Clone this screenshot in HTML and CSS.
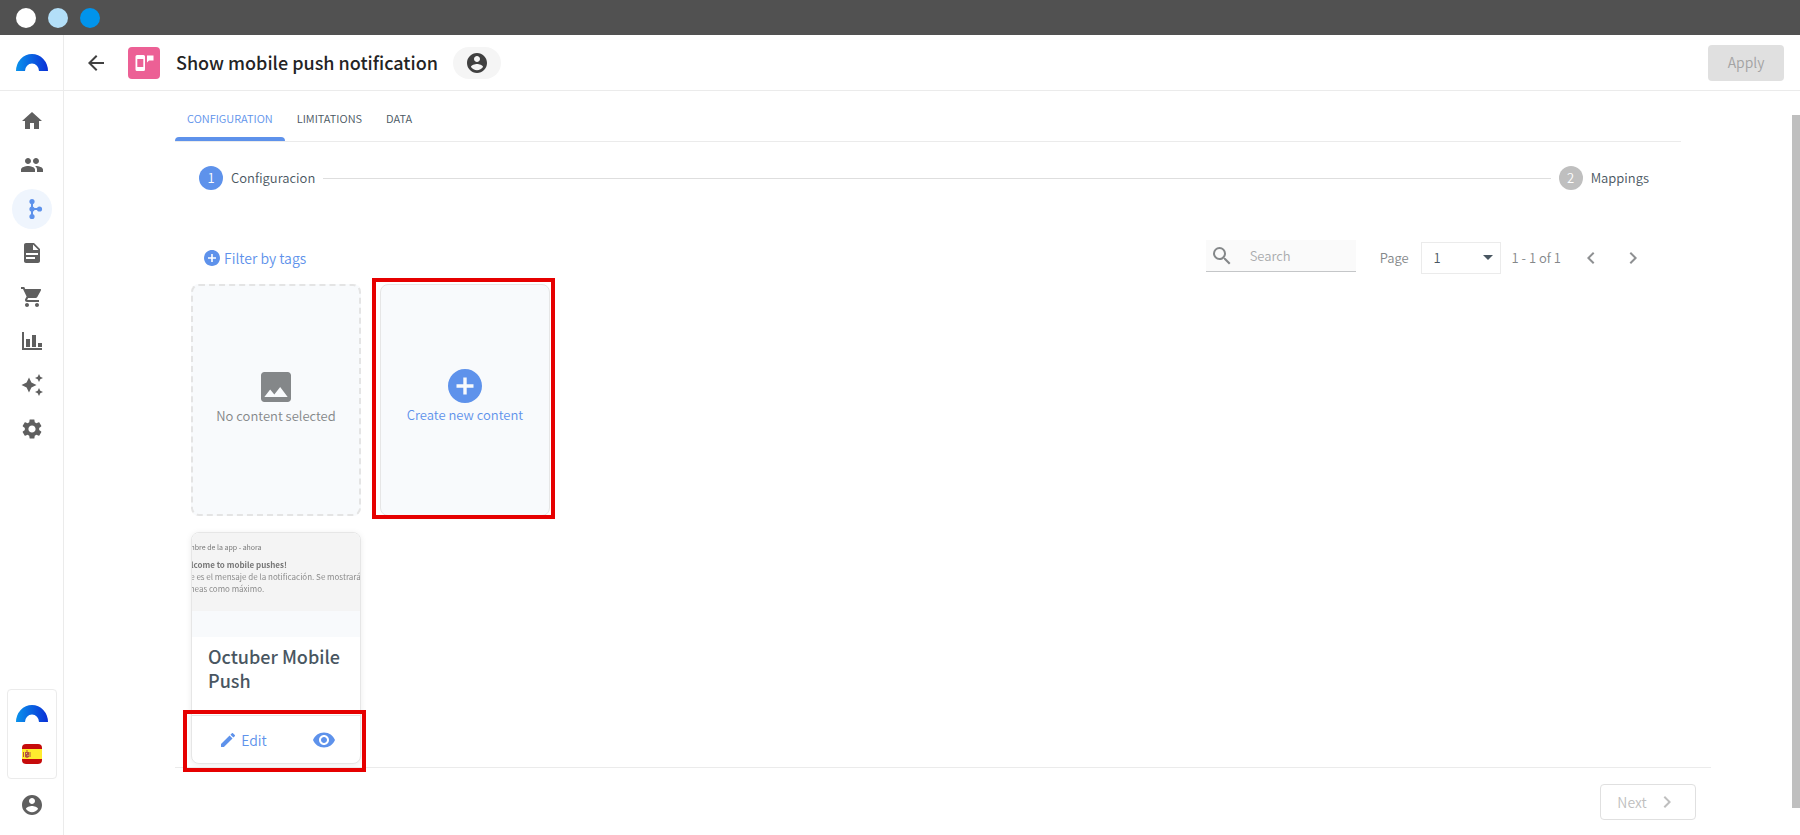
FILE: index.html
```html
<!DOCTYPE html>
<html lang="en">
<head>
    <meta charset="UTF-8">
    <meta name="viewport" content="width=device-width, initial-scale=1.0">
    <title>Show mobile push notification</title>
    <link rel="stylesheet" href="styles.css">
</head>
<body>
    <!-- shared shapes -->
    <svg class="defs" aria-hidden="true">
        <defs>
            <linearGradient id="arc-fill" x1="0" y1="0" x2="1" y2="0">
                <stop offset="0" stop-color="#0a93ec" />
                <stop offset="1" stop-color="#0a2fd6" />
            </linearGradient>
            <symbol id="logo" viewBox="0 0 32 17">
                <path fill="url(#arc-fill)" d="M0 17a16 17 0 0 1 32 0h-9a7 7.500 0 0 0-14 0z" />
            </symbol>
            <symbol id="account" viewBox="2 2 20 20">
                <path d="M12 2C6.480 2 2 6.480 2 12s4.480 10 10 10 10-4.480 10-10S17.520 2 12 2zm0 3c1.660 0 3 1.340 3 3s-1.340 3-3 3-3-1.340-3-3 1.340-3 3-3zm0 14.200c-2.500 0-4.710-1.280-6-3.220.030-1.990 4-3.080 6-3.080 1.990 0 5.970 1.090 6 3.080-1.290 1.940-3.500 3.220-6 3.220z" />
            </symbol>
            <symbol id="plus-circle" viewBox="2 2 20 20">
                <path d="M12 2C6.480 2 2 6.480 2 12s4.480 10 10 10 10-4.480 10-10S17.520 2 12 2zm5 11h-4v4h-2v-4H7v-2h4V7h2v4h4v2z" />
            </symbol>
        </defs>
    </svg>

    <div class="titlebar">
        <span class="dot dot-white"></span>
        <span class="dot dot-light"></span>
        <span class="dot dot-blue"></span>
    </div>

    <div class="app">
        <aside class="sidebar">
            <a href="#" class="brand" aria-label="Start"><svg class="logo"><use href="#logo" /></svg></a>
            <nav class="menu">
                <a href="#" class="menu-item" aria-label="Home"><svg viewBox="0 0 24 24"><path d="M10 20v-6h4v6h5v-8h3L12 3 2 12h3v8z" /></svg></a>
                <a href="#" class="menu-item" aria-label="Users"><svg viewBox="0 0 24 24"><path d="M16 11c1.660 0 2.990-1.340 2.990-3S17.660 5 16 5s-3 1.340-3 3 1.340 3 3 3zm-8 0c1.660 0 2.990-1.340 2.990-3S9.660 5 8 5 5 6.340 5 8s1.340 3 3 3zm0 2c-2.330 0-7 1.170-7 3.500V19h14v-2.500c0-2.330-4.670-3.500-7-3.500zm8 0c-.290 0-.620.020-.970.050 1.160.840 1.970 1.970 1.970 3.450V19h6v-2.500c0-2.330-4.670-3.500-7-3.500z" /></svg></a>
                <a href="#" class="menu-item active" aria-label="Workflows"><svg viewBox="0 0 24 24"><path d="M11 4h2v16h-2zM12 11h8v2h-8z" /><circle cx="12" cy="4.500" r="2.600" /><circle cx="12" cy="12" r="2.600" /><circle cx="12" cy="19.500" r="2.600" /><circle cx="19.500" cy="12" r="2.600" /></svg></a>
                <a href="#" class="menu-item" aria-label="Contents"><svg viewBox="0 0 24 24"><path d="M14 2H6c-1.100 0-1.990.900-1.990 2L4 20c0 1.100.890 2 1.990 2H18c1.100 0 2-.900 2-2V8l-6-6zm2 16H6v-2h9v2zm2-4H6v-2h12v2zm-5-5V3.500L18.500 9H13z" /></svg></a>
                <a href="#" class="menu-item" aria-label="Orders"><svg viewBox="0 0 24 24"><path d="M7 18c-1.100 0-1.990.900-1.990 2S5.900 22 7 22s2-.900 2-2-.900-2-2-2zM1 2v2h2l3.600 7.590-1.350 2.450c-.160.280-.250.610-.250.960 0 1.100.900 2 2 2h12v-2H7.420c-.140 0-.250-.110-.250-.250l.030-.120.900-1.630h7.450c.750 0 1.410-.410 1.750-1.030l3.580-6.490A1 1 0 0 0 20 4H5.210l-.940-2H1zm16 16c-1.100 0-1.990.900-1.990 2s.890 2 1.990 2 2-.900 2-2-.900-2-2-2z" /></svg></a>
                <a href="#" class="menu-item" aria-label="Analytics"><svg viewBox="0 0 24 24"><path d="M2 3h2v16h18v2H2zM6 10h4v8H6zM12 6h4v12h-4zM18 14h4v4h-4z" /></svg></a>
                <a href="#" class="menu-item" aria-label="Predictions"><svg viewBox="0 0 24 24"><path d="M9 4.500l2.400 5.100L16.500 12l-5.100 2.400L9 19.500l-2.400-5.100L1.500 12l5.100-2.400zM19 1l1.300 2.700L23 5l-2.700 1.300L19 9l-1.300-2.700L15 5l2.700-1.300zM19 15l1.300 2.700L23 19l-2.700 1.300L19 23l-1.300-2.700L15 19l2.700-1.300z" /></svg></a>
                <a href="#" class="menu-item" aria-label="Settings"><svg viewBox="0 0 24 24"><path d="M19.140 12.940c.040-.300.060-.610.060-.940 0-.320-.020-.640-.070-.940l2.030-1.580c.180-.140.230-.410.120-.610l-1.920-3.320c-.120-.220-.370-.290-.590-.220l-2.390.960c-.500-.380-1.030-.700-1.620-.940l-.360-2.540c-.040-.240-.240-.410-.480-.410h-3.840c-.240 0-.430.170-.470.410l-.360 2.540c-.590.240-1.130.570-1.620.940l-2.390-.960c-.220-.080-.470 0-.590.220L2.740 8.870c-.120.210-.080.470.120.610l2.030 1.580c-.050.300-.090.630-.090.940s.020.640.070.940l-2.030 1.580c-.180.140-.230.410-.120.610l1.920 3.320c.120.220.370.290.590.220l2.390-.960c.500.380 1.030.700 1.620.940l.360 2.540c.050.240.240.410.480.410h3.840c.240 0 .440-.170.470-.410l.360-2.540c.590-.240 1.130-.560 1.620-.940l2.390.960c.220.080.470 0 .590-.220l1.920-3.320c.120-.220.070-.470-.120-.610l-2.010-1.580zM12 15.600c-1.980 0-3.600-1.620-3.600-3.600s1.620-3.600 3.600-3.600 3.600 1.620 3.600 3.600-1.620 3.600-3.600 3.600z" /></svg></a>
            </nav>
            <div class="workspace">
                <svg class="logo"><use href="#logo" /></svg>
                <svg class="flag" viewBox="0 0 20 20">
                    <path fill="#c60b0b" d="M4 0h12a4 4 0 0 1 4 4v12a4 4 0 0 1-4 4H4a4 4 0 0 1-4-4V4a4 4 0 0 1 4-4z" />
                    <path fill="#ffec2e" d="M0 5h20v10H0z" />
                    <path fill="#b5543c" d="M1 8h1v5H1zM3 8h4v5l-2 1-2-1zM7.500 8h1v5h-1zM4 6.500h2v1H4z" />
                    <path fill="#d9b3a0" d="M4 9h1v1H4zM5.500 11h1v1h-1z" />
                </svg>
            </div>
            <a href="#" class="profile" aria-label="Profile"><svg><use href="#account" /></svg></a>
        </aside>

        <div class="page">
            <header class="header">
                <button class="back" aria-label="Back"><svg viewBox="4 4 16 16"><path d="M20 11H7.830l5.590-5.590L12 4l-8 8 8 8 1.410-1.410L7.830 13H20v-2z" /></svg></button>
                <span class="type-icon">
                    <svg viewBox="0 0 20 20"><path fill-rule="evenodd" d="M3 2h6.500a1.500 1.500 0 0 1 1.500 1.500v13a1.500 1.500 0 0 1-1.500 1.500H3A1.500 1.500 0 0 1 1.500 16.500v-13A1.500 1.500 0 0 1 3 2zm.300 4v8h6V6zM13 2.500h6.500v5H15l-2 2z" /></svg>
                </span>
                <h1>Show mobile push notification</h1>
                <button class="audience" aria-label="Audience"><svg><use href="#account" /></svg></button>
                <button class="apply" disabled>Apply</button>
            </header>

            <div class="body">
                <main class="main">
                    <div class="content">
                        <nav class="tabs">
                            <a href="#" class="tab selected">CONFIGURATION</a>
                            <a href="#" class="tab">LIMITATIONS</a>
                            <a href="#" class="tab">DATA</a>
                        </nav>

                        <div class="stepper">
                            <span class="step-number current">1</span>
                            <span>Configuracion</span>
                            <span class="step-line"></span>
                            <span class="step-number">2</span>
                            <span>Mappings</span>
                        </div>

                        <div class="toolbar">
                            <button class="filter"><svg><use href="#plus-circle" /></svg>Filter by tags</button>
                            <div class="search">
                                <svg viewBox="3 3 18 18"><path d="M15.500 14h-.790l-.280-.270A6.470 6.470 0 0 0 16 9.500 6.500 6.500 0 1 0 9.500 16c1.610 0 3.090-.590 4.230-1.570l.270.280v.790l5 4.990L20.490 19l-4.990-5zm-6 0C7.010 14 5 11.990 5 9.500S7.010 5 9.500 5 14 7.010 14 9.500 11.990 14 9.500 14z" /></svg>
                                <input type="text" placeholder="Search" aria-label="Search">
                            </div>
                            <label for="page-select">Page</label>
                            <div class="select-wrap">
                                <select id="page-select"><option>1</option></select>
                                <span class="caret"></span>
                            </div>
                            <span class="range">1 - 1 of 1</span>
                            <button class="pager" aria-label="Previous page"><svg viewBox="0 0 24 24"><path d="M15.410 7.410L14 6l-6 6 6 6 1.410-1.410L10.830 12z" /></svg></button>
                            <button class="pager" aria-label="Next page"><svg viewBox="0 0 24 24"><path d="M10 6L8.590 7.410 13.170 12l-4.580 4.590L10 18l6-6z" /></svg></button>
                        </div>

                        <div class="cards">
                            <div class="card card-empty">
                                <svg viewBox="3 3 18 18"><path d="M21 19V5c0-1.100-.900-2-2-2H5c-1.100 0-2 .900-2 2v14c0 1.100.900 2 2 2h14c1.100 0 2-.900 2-2zM8.500 13.500l2.500 3.010L14.500 12l4.500 6H5l3.500-4.500z" /></svg>
                                No content selected
                            </div>
                            <button class="card card-new marked">
                                <svg><use href="#plus-circle" /></svg>
                                Create new content
                            </button>
                            <article class="card card-push">
                                <div class="preview">
                                    <div class="push">
                                        <p class="push-app">Nombre de la app - ahora</p>
                                        <p class="push-title">Welcome to mobile pushes!</p>
                                        <p>Este es el mensaje de la notificación. Se mostrará</p>
                                        <p>2 líneas como máximo.</p>
                                    </div>
                                </div>
                                <h2>Octuber Mobile Push</h2>
                                <div class="actions marked">
                                    <button><svg class="pencil" viewBox="3 3 18 18"><path d="M3 17.250V21h3.750L17.810 9.940l-3.750-3.750L3 17.250zM20.710 7.040a1 1 0 0 0 0-1.410l-2.340-2.340a1 1 0 0 0-1.410 0l-1.830 1.830 3.750 3.750 1.830-1.830z" /></svg>Edit</button>
                                    <button aria-label="Preview"><svg class="eye" viewBox="1 4.500 22 15"><path d="M12 4.500C7 4.500 2.730 7.610 1 12c1.730 4.390 6 7.500 11 7.500s9.270-3.110 11-7.500c-1.730-4.390-6-7.500-11-7.500zM12 17c-2.760 0-5-2.240-5-5s2.240-5 5-5 5 2.240 5 5-2.240 5-5 5zm0-8c-1.660 0-3 1.340-3 3s1.340 3 3 3 3-1.340 3-3-1.340-3-3-3z" /></svg></button>
                                </div>
                            </article>
                        </div>
                    </div>
                    <footer class="footer">
                        <button class="next" disabled>Next<svg viewBox="0 0 24 24"><path d="M10 6L8.590 7.410 13.170 12l-4.580 4.590L10 18l6-6z" /></svg></button>
                    </footer>
                </main>
                <div class="scroll"><div class="thumb"></div></div>
            </div>
        </div>
    </div>
</body>
</html>
```

FILE: styles.css
```css
* {
    box-sizing: border-box;
}

body {
    margin: 0;
    height: 100vh;
    display: flex;
    flex-direction: column;
    overflow: hidden;
    background-color: #fff;
    color: #495661;
    /* the Latin letters of Noto Sans CJK are Source Sans */
    font-family: "Source Sans Pro", "Noto Sans CJK SC", sans-serif;
    font-size: 13px;
    font-weight: 350;
    line-height: 20px;
}

h1,
h2,
p {
    margin: 0;
}

a {
    color: inherit;
    text-decoration: none;
}

button {
    display: flex;
    align-items: center;
    justify-content: center;
    padding: 0;
    border: none;
    background: none;
    color: inherit;
    font: inherit;
    cursor: pointer;
}

svg {
    display: block;
    flex: none;
    fill: currentColor;
}

.defs {
    position: absolute;
    width: 0;
    height: 0;
}

/* window bar */
.titlebar {
    flex: none;
    display: flex;
    align-items: center;
    gap: 12px;
    height: 35px;
    padding: 0 16px;
    background-color: #515151;
}

.dot {
    width: 20px;
    height: 20px;
    border-radius: 50%;
}

.dot-white {
    background-color: #fff;
}

.dot-light {
    background-color: #b3dff8;
}

.dot-blue {
    background-color: #0194ec;
}

.app {
    flex: 1;
    display: flex;
    min-height: 0;
}

/* sidebar */
.sidebar {
    flex: none;
    display: flex;
    flex-direction: column;
    align-items: center;
    width: 64px;
    padding-bottom: 20px;
    border-right: 1px solid #ebebeb;
    color: #5f5f5f;
}

.brand {
    display: flex;
    align-items: center;
    justify-content: center;
    width: 100%;
    height: 56px;
    border-bottom: 1px solid #ebebeb;
}

.logo {
    width: 32px;
    height: 17px;
}

.menu {
    display: flex;
    flex-direction: column;
    gap: 4px;
    padding-top: 10px;
}

.menu-item {
    display: flex;
    align-items: center;
    justify-content: center;
    width: 40px;
    height: 40px;
    border-radius: 50%;
}

.menu-item svg {
    width: 24px;
    height: 24px;
}

.menu-item.active {
    background-color: #eff5fd;
    color: #5e92eb;
}

.workspace {
    display: flex;
    flex-direction: column;
    align-items: center;
    gap: 22px;
    width: 50px;
    margin-top: auto;
    padding: 15px 0 14px;
    border: 1px solid #ebebeb;
    border-radius: 4px;
}

.flag,
.profile svg {
    width: 20px;
    height: 20px;
}

.profile {
    margin-top: 16px;
}

/* header */
.page {
    flex: 1;
    display: flex;
    flex-direction: column;
    min-width: 0;
}

.header {
    flex: none;
    display: flex;
    align-items: center;
    height: 56px;
    padding: 0 16px 0 24px;
    border-bottom: 1px solid #ebebeb;
    color: #404040;
}

.back svg {
    width: 16px;
    height: 16px;
}

.type-icon {
    display: flex;
    align-items: center;
    justify-content: center;
    width: 32px;
    height: 32px;
    margin: 0 16px 0 24px;
    border-radius: 4px;
    background-color: #ec6095;
    color: #fff;
}

.type-icon svg {
    width: 20px;
    height: 20px;
}

h1 {
    padding-bottom: 2px;
    color: #242424;
    font-size: 18px;
    font-weight: 500;
    line-height: 24px;
}

.audience {
    width: 48px;
    height: 32px;
    margin-left: 15px;
    border-radius: 16px;
    background-color: #f5f5f5;
}

.audience svg {
    width: 20px;
    height: 20px;
}

.apply {
    width: 76px;
    height: 36px;
    margin-left: auto;
    padding-bottom: 2px;
    border-radius: 4px;
    background-color: #e0e0e0;
    color: #a3a3a3;
    font-size: 14px;
}

/* main area */
.body {
    flex: 1;
    display: flex;
    min-height: 0;
}

.main {
    flex: 1;
    display: flex;
    flex-direction: column;
    min-width: 0;
}

.content {
    flex: 1;
    padding: 0 111px;
}

.scroll {
    width: 8px;
    padding: 24px 0 27px;
}

.thumb {
    height: 100%;
    background-color: #bfbfbf;
}

.tabs {
    display: flex;
    height: 51px;
    border-bottom: 1px solid #ebebeb;
    font-size: 11px;
}

.tab {
    display: flex;
    align-items: center;
    padding: 10px 12px 2px;
    border-bottom: 4px solid transparent;
}

.tab.selected {
    position: relative;
    color: #5e92eb;
}

.tab.selected::after {
    content: "";
    position: absolute;
    left: 0;
    right: 0;
    bottom: -4px;
    height: 4px;
    border-radius: 4px 4px 0 0;
    background-color: #5e92eb;
}

.stepper {
    display: flex;
    align-items: center;
    gap: 8px;
    padding: 24px 32px 24px 24px;
}

.step-number {
    width: 24px;
    height: 24px;
    border-radius: 50%;
    background-color: #bfbfbf;
    color: #fff;
    line-height: 24px;
    text-align: center;
}

.step-number.current {
    background-color: #5e92eb;
}

.step-line {
    flex: 1;
    height: 1px;
    background-color: #dedede;
}

/* toolbar */
.toolbar {
    display: flex;
    align-items: center;
    height: 32px;
    margin-top: 28px;
    padding: 0 36px 0 29px;
    color: #848789;
}

.filter {
    gap: 4px;
    margin-right: auto;
    color: #5e92eb;
    font-size: 14px;
}

.filter svg {
    width: 16px;
    height: 16px;
}

.search {
    display: flex;
    align-items: center;
    width: 150px;
    height: 32px;
    margin: 0 24px 4px 0;
    padding-left: 7px;
    border-bottom: 1px solid #c4c6c8;
    background-color: #fafafa;
}

.search svg {
    width: 18px;
    height: 18px;
}

.search input {
    width: 100px;
    margin-left: 19px;
    padding: 0;
    border: none;
    background: none;
    color: inherit;
    font: inherit;
    outline: none;
}

.search input::placeholder {
    color: #a9abad;
}

.select-wrap {
    position: relative;
    width: 80px;
    margin: 0 11px 0 12px;
}

select {
    display: block;
    appearance: none;
    width: 100%;
    height: 32px;
    padding: 0 12px;
    border: 1px solid #ebebeb;
    border-radius: 0;
    background-color: #fff;
    color: #495661;
    font: inherit;
}

.caret {
    position: absolute;
    top: 13px;
    right: 8px;
    border: 5px solid transparent;
    border-top-color: #495661;
    border-bottom: none;
}

.pager {
    width: 24px;
    height: 32px;
    margin-left: 18px;
    color: #8e9092;
}

.pager svg {
    width: 24px;
    height: 24px;
}

/* cards */
.cards {
    display: grid;
    grid-template-columns: 170px 170px;
    gap: 16px 19px;
    margin-top: 10px;
    padding-left: 16px;
}

.card {
    display: flex;
    flex-direction: column;
    height: 232px;
    border: 1px solid #e6e6e6;
    border-radius: 8px;
    background-color: #f8fafc;
}

.card-empty {
    align-items: center;
    justify-content: center;
    gap: 4px;
    padding-bottom: 3px;
    border: 2px dashed #e4e4e4;
    color: #848789;
}

.card-empty svg {
    width: 30px;
    height: 30px;
}

.card-new {
    gap: 2px;
    padding-bottom: 6px;
    color: #5e92eb;
}

.card-new svg {
    width: 34px;
    height: 34px;
}

.card-push {
    background-color: #fff;
    box-shadow: 0 1px 6px rgba(0, 0, 0, 0.08);
}

.preview {
    display: flex;
    flex-direction: column;
    align-items: center;
    height: 104px;
    overflow: hidden;
    border-radius: 7px 7px 0 0;
    background-color: #f8fafc;
}

.push {
    flex: none;
    width: 202px;
    height: 78px;
    padding: 8px 0 0 4px;
    background-color: #f4f4f4;
    color: #8c8c8c;
    font-size: 8px;
    font-weight: 400;
    line-height: 12px;
    white-space: nowrap;
}

.push p {
    filter: blur(0.3px);
}

.push .push-app {
    margin-bottom: 6px;
    color: #777;
    font-size: 7px;
}

.push .push-title {
    color: #777;
    font-weight: 700;
}

h2 {
    padding: 7px 16px 0;
    font-size: 18px;
    font-weight: 500;
    line-height: 24px;
}

.actions {
    display: grid;
    grid-template-columns: 104px 56px;
    height: 48px;
    margin-top: auto;
    border-top: 1px solid #e6e6e6;
    color: #5e92eb;
    font-size: 14px;
}

.actions button {
    gap: 6px;
}

.pencil {
    width: 14px;
    height: 14px;
}

.eye {
    width: 22px;
    height: 16px;
}

/* red frame round a marked control */
.marked {
    position: relative;
}

.marked::after {
    content: "";
    position: absolute;
    inset: -7px -6px -4px -9px;
    border: 4px solid #e60000;
}

.actions.marked::after {
    inset: -6px -6px -9px -9px;
}

/* footer */
.footer {
    flex: none;
    display: flex;
    justify-content: flex-end;
    margin: 0 81px 0 111px;
    padding: 16px 15px 15px;
    border-top: 1px solid #ebebeb;
}

.next {
    gap: 8px;
    width: 96px;
    height: 36px;
    border: 1px solid #e0e0e0;
    border-radius: 4px;
    color: #bfbfbf;
    font-size: 14px;
}

.next svg {
    width: 24px;
    height: 24px;
}
```
